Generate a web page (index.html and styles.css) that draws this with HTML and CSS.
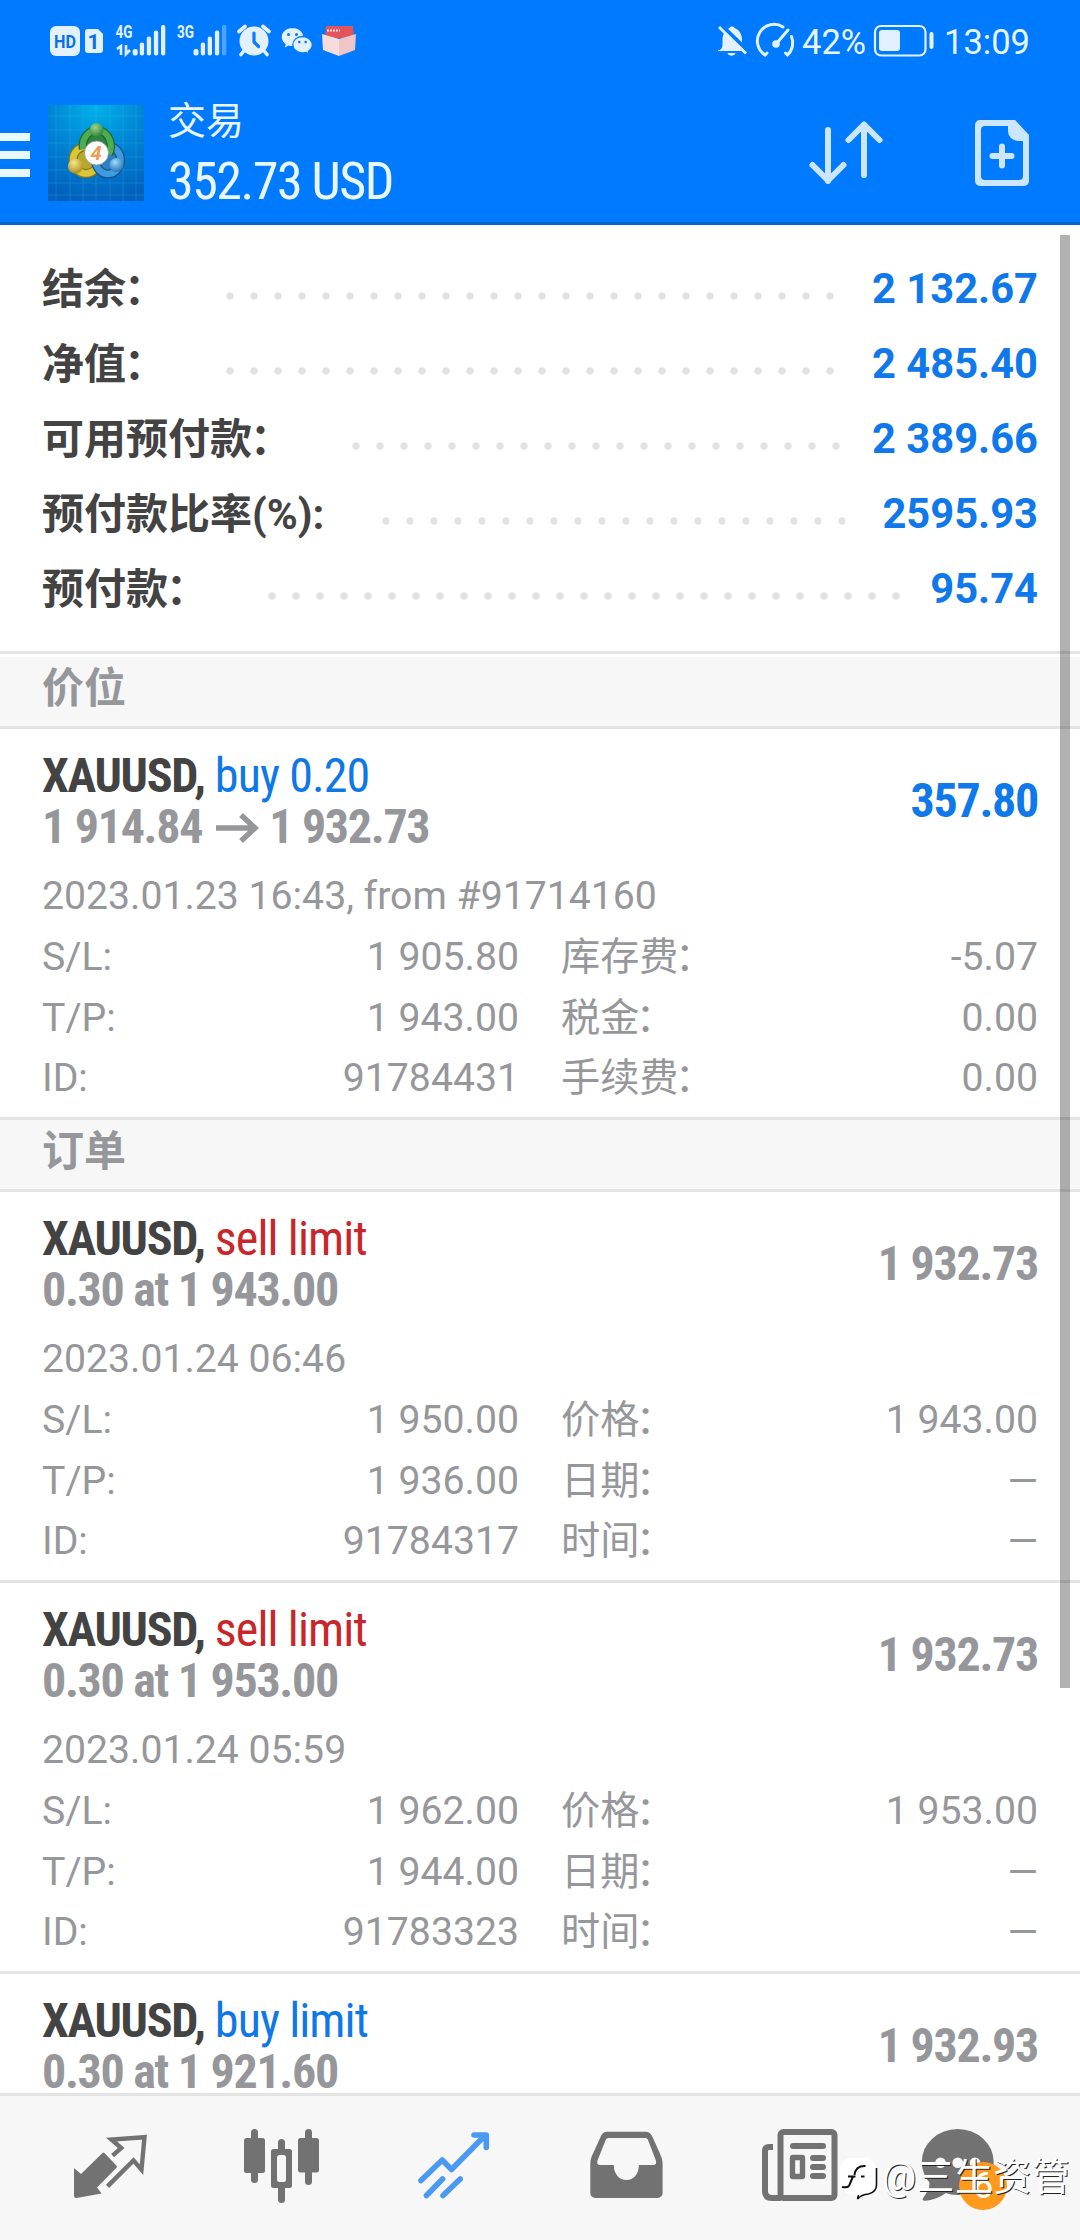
FILE: index.html
```html
<!DOCTYPE html>
<html lang="zh-CN">
<head>
<meta charset="utf-8">
<title>交易</title>
<link rel="stylesheet" href="styles.css">
</head>
<body>
<div class="app">
  <header class="header">
    <div class="status">
      <svg class="s-hd" viewBox="50 24 30 34" width="30" height="34"><rect x="50" y="26" width="30" height="30" rx="6" fill="#e3f1ff"/><text x="65" y="47.5" text-anchor="middle" textLength="22" lengthAdjust="spacingAndGlyphs" class="hd-text">HD</text></svg>
      <svg class="s-sim" viewBox="85 24 18 34" width="18" height="34"><path d="M88 29h10l5 5v16a3 3 0 0 1-3 3H88a3 3 0 0 1-3-3V32a3 3 0 0 1 3-3z" fill="#e3f1ff"/><text x="93.5" y="49" text-anchor="middle" class="sim-text">1</text></svg>
      <svg class="s-4g" viewBox="115 24 51 34" width="51" height="34"><text x="115.500" y="38" textLength="17" lengthAdjust="spacingAndGlyphs" class="net-text">4G</text><g fill="#e3f1ff"><rect x="132.700" y="49" width="5" height="6.500" rx="2"/><rect x="139.800" y="42.500" width="4.300" height="13" rx="2"/><rect x="146.800" y="36.500" width="4.300" height="19" rx="2"/><rect x="153.900" y="30.500" width="4.300" height="25" rx="2"/><rect x="161" y="25" width="4.300" height="30.500" rx="2"/></g><path d="M117 49l4-3v9M126 45v9l4-4" fill="none" stroke="#e3f1ff" stroke-width="2.600"/></svg>
      <svg class="s-3g" viewBox="176 24 51 34" width="51" height="34"><text x="177" y="38" textLength="17" lengthAdjust="spacingAndGlyphs" class="net-text">3G</text><g fill="#e3f1ff"><rect x="193.500" y="49" width="5" height="6.500" rx="2"/><rect x="200.800" y="42.500" width="4.300" height="13" rx="2"/><rect x="207.700" y="36.500" width="4.300" height="19" rx="2"/><rect x="214.900" y="30.500" width="4.300" height="25" rx="2"/><rect x="222" y="25" width="4.300" height="30.500" rx="2" opacity=".35"/></g></svg>
      <svg class="s-alarm" viewBox="237 24 34 34" width="34" height="34"><circle cx="254" cy="41" r="14.500" fill="#e3f1ff"/><path d="M239 31.500l6-5M269 31.500l-6-5" stroke="#e3f1ff" stroke-width="3.600" stroke-linecap="round"/><path d="M243 52l-2 2.500M265 52l2 2.500" stroke="#e3f1ff" stroke-width="3.600" stroke-linecap="round"/><path d="M254 33v9l4.500 4.500" fill="none" stroke="#0a7cff" stroke-width="3.200" stroke-linecap="round" stroke-linejoin="round"/></svg>
      <svg class="s-wechat" viewBox="281 24 33 34" width="33" height="34"><path d="M292.500 28c-6 0-10.700 4-10.700 9 0 3 1.500 5.500 4 7.200l-1 3.300 3.800-2c1.300.4 2.600.6 4 .6 6 0 10.600-4 10.600-9s-4.700-9.100-10.700-9.100z" fill="#e3f1ff"/><path d="M302.500 36.500c-5.300 0-9.700 3.600-9.700 8.200s4.400 8.300 9.700 8.300c1.200 0 2.400-.2 3.500-.5l3.300 1.700-.9-2.900c2.400-1.600 3.900-3.900 3.900-6.600 0-4.600-4.500-8.200-9.800-8.200z" fill="#e3f1ff" stroke="#007aff" stroke-width="1.300"/><g fill="#007aff"><circle cx="288.500" cy="34.500" r="1.500"/><circle cx="296.500" cy="34.500" r="1.500"/><circle cx="299.300" cy="42" r="1.300"/><circle cx="305.700" cy="42" r="1.300"/></g></svg>
      <svg class="s-box" viewBox="322 24 35 34" width="35" height="34"><path d="M326 26h27l1 12h-29z" fill="#e2555d"/><path d="M322 34l17 5v17l-16-6z" fill="#f7dcdc"/><path d="M356 34l-17 5v17l16-6z" fill="#efc6c8"/><path d="M327 30.500h13" stroke="#fbe4e4" stroke-width="2" stroke-dasharray="2 1"/></svg>
      <svg class="s-bell" viewBox="716 24 32 34" width="32" height="34"><path d="M720 50c2-1.500 2.500-3 2.500-6v-4c0-6 3-10.500 7-12 .5-2 4.500-2 5 0 4.500 1.500 7.500 6 7.500 12v4c0 3 .5 4.500 2.500 6v1H718v-1z" fill="#e3f1ff"/><path d="M727.500 53h8c-1 3.500-7 3.500-8 0z" fill="#e3f1ff"/><path d="M721 25l27 26" stroke="#007aff" stroke-width="4"/><path d="M719 27l27 26.500" stroke="#e3f1ff" stroke-width="2.800"/></svg>
      <svg class="s-gauge" viewBox="757 22 38 36" width="38" height="36"><g fill="none" stroke="#e3f1ff" stroke-width="3" stroke-linecap="round"><path d="M767 52l-2 2a16.500 16.500 0 0 1 18-28"/><path d="M791.500 35.500a16.500 16.500 0 0 1-4 18.500l-2-2"/><path d="M776 43l12-14"/></g><circle cx="776" cy="43" r="3.800" fill="#e3f1ff"/></svg>
      <span class="pct">42%</span>
      <svg class="s-batt" viewBox="873 24 62 34" width="62" height="34"><rect x="875" y="26" width="50.500" height="29.500" rx="6" fill="none" stroke="#e3f1ff" stroke-width="2.200"/><rect x="879" y="30" width="21" height="21" rx="3" fill="#e3f1ff"/><rect x="929.500" y="32" width="4" height="17" rx="2" fill="#e3f1ff"/></svg>
      <span class="clock">13:09</span>
    </div>
    <div class="bar">
      <div class="menu"><i></i><i></i><i></i></div>
      <svg class="logo" viewBox="0 0 96 96" width="96" height="96">
        <defs>
          <radialGradient id="lg" cx=".5" cy="0" r="1"><stop offset="0" stop-color="#00b2ea"/><stop offset=".5" stop-color="#0084d4"/><stop offset="1" stop-color="#0061bd"/></radialGradient>
          <radialGradient id="gg" cx=".4" cy=".3" r=".8"><stop offset="0" stop-color="#9bd48b"/><stop offset="1" stop-color="#1d7a30"/></radialGradient>
          <radialGradient id="yy" cx=".4" cy=".3" r=".8"><stop offset="0" stop-color="#f8e88a"/><stop offset="1" stop-color="#a38412"/></radialGradient>
          <radialGradient id="bb" cx=".4" cy=".3" r=".8"><stop offset="0" stop-color="#9fdcf8"/><stop offset="1" stop-color="#1566b0"/></radialGradient>
        </defs>
        <rect width="96" height="96" fill="url(#lg)"/>
        <path d="M8 0v96M22 0v96M35 0v96M48 0v96M62 0v96M75 0v96M88 0v96M0 11h96M0 25h96M0 38h96M0 52h96M0 65h96M0 78h96M0 90h96" stroke="#5cc6f0" stroke-width=".7" opacity=".3"/>
        <ellipse cx="38" cy="55" rx="13" ry="13.500" fill="#b9a62a" stroke="#82731d" stroke-width="9"/><ellipse cx="38" cy="55" rx="13" ry="13.500" fill="none" stroke="#d8c638" stroke-width="6.500"/>
        <ellipse cx="60" cy="55" rx="12.500" ry="14" fill="#2b7fc4" stroke="#16538e" stroke-width="9"/><ellipse cx="60" cy="55" rx="12.500" ry="14" fill="none" stroke="#3f9bdc" stroke-width="6.500"/>
        <path d="M35 44a14 16 0 1 1 26 5" fill="#2f8540" stroke="#1f6631" stroke-width="8.500"/><path d="M35 44a14 16 0 1 1 26 5" fill="none" stroke="#4cae50" stroke-width="6"/>
        <circle cx="48.500" cy="25" r="7" fill="url(#gg)"/><circle cx="27.500" cy="61" r="7.500" fill="url(#yy)"/><circle cx="68.500" cy="60" r="7" fill="url(#bb)"/>
        <circle cx="48.500" cy="48" r="12" fill="#fff" stroke="#8a949b" stroke-width=".8"/>
        <text x="48" y="55" text-anchor="middle" class="logo-text">4</text>
      </svg>
      <div class="titles"><div class="t1">交易</div><div class="t2 cond">352.73 USD</div></div>
      <svg class="i-sort" viewBox="808 118 78 70" width="78" height="70"><path d="M828 130v51M812.500 165l15.500 15.500 15.500-15.500M864 175v-50M848.500 140l15.500-15.500 15.500 15.500" fill="none" stroke="#cce6ff" stroke-width="6" stroke-linecap="round" stroke-linejoin="round"/></svg>
      <svg class="i-new" viewBox="975 118 54 70" width="54" height="70"><path fill-rule="evenodd" d="M980 120h35l14 15v46a5 5 0 0 1-5 5h-44a5 5 0 0 1-5-5v-56a5 5 0 0 1 5-5zm5 6a4 4 0 0 0-4 4v46a4 4 0 0 0 4 4h34a4 4 0 0 0 4-4v-35h-5a10 10 0 0 1-10-10v-5z" fill="#cce6ff"/><path d="M1002 146.500v19M992.500 156h19" stroke="#cce6ff" stroke-width="6" stroke-linecap="round"/></svg>
    </div>
  </header>

  <main class="list">
    <section class="summary">
      <div class="row"><span class="label">结余<i>：</i></span><span class="dots"></span><span class="value">2 132.67</span></div>
      <div class="row"><span class="label">净值<i>：</i></span><span class="dots"></span><span class="value">2 485.40</span></div>
      <div class="row"><span class="label">可用预付款<i>：</i></span><span class="dots"></span><span class="value">2 389.66</span></div>
      <div class="row"><span class="label">预付款比率(%):</span><span class="dots"></span><span class="value">2595.93</span></div>
      <div class="row"><span class="label">预付款<i>：</i></span><span class="dots"></span><span class="value">95.74</span></div>
    </section>
    <h2 class="band">价位</h2>
    <article class="deal">
      <div class="top"><div><div class="line cond"><b>XAUUSD,</b> <span class="buy">buy 0.20</span></div><div class="line cond price">1 914.84<svg class="arrow" viewBox="0 0 43 34" width="43" height="34"><path d="M0 19h39M25 6l14 13-14 13" fill="none" stroke="#96979b" stroke-width="5.500"/></svg>1 932.73</div></div><div class="total cond profit">357.80</div></div>
      <div class="date">2023.01.23 16:43, from #91714160</div>
      <div class="grid">
        <span>S/L:</span><span>1 905.80</span><span>库存费<i>：</i></span><span>-5.07</span>
        <span>T/P:</span><span>1 943.00</span><span>税金<i>：</i></span><span>0.00</span>
        <span>ID:</span><span>91784431</span><span>手续费<i>：</i></span><span>0.00</span>
      </div>
    </article>
    <h2 class="band">订单</h2>
    <article class="deal">
      <div class="top"><div><div class="line cond"><b>XAUUSD,</b> <span class="sell">sell limit</span></div><div class="line cond price">0.30 at 1 943.00</div></div><div class="total cond">1 932.73</div></div>
      <div class="date">2023.01.24 06:46</div>
      <div class="grid">
        <span>S/L:</span><span>1 950.00</span><span>价格<i>：</i></span><span>1 943.00</span>
        <span>T/P:</span><span>1 936.00</span><span>日期<i>：</i></span><span>—</span>
        <span>ID:</span><span>91784317</span><span>时间<i>：</i></span><span>—</span>
      </div>
    </article>
    <article class="deal">
      <div class="top"><div><div class="line cond"><b>XAUUSD,</b> <span class="sell">sell limit</span></div><div class="line cond price">0.30 at 1 953.00</div></div><div class="total cond">1 932.73</div></div>
      <div class="date">2023.01.24 05:59</div>
      <div class="grid">
        <span>S/L:</span><span>1 962.00</span><span>价格<i>：</i></span><span>1 953.00</span>
        <span>T/P:</span><span>1 944.00</span><span>日期<i>：</i></span><span>—</span>
        <span>ID:</span><span>91783323</span><span>时间<i>：</i></span><span>—</span>
      </div>
    </article>
    <article class="deal">
      <div class="top"><div><div class="line cond"><b>XAUUSD,</b> <span class="buy">buy limit</span></div><div class="line cond price">0.30 at 1 921.60</div></div><div class="total cond">1 932.93</div></div>
    </article>
    <div class="scrollbar"></div>
  </main>

  <nav class="tabs">
    <svg viewBox="67 2120 86 92"><path d="M74 2168l7 6 21.500-21q1-.8 2 0l12 12.700q.8 1 0 2L97 2187.500l4.600 6-25 4.500q-2.600 0-2.600-2.500z" fill="#727272"/><path d="M112.600 2155.700l8.600-7.700-9.700-8.500 33-2.300-3 32.500-8-9.300-26 26" fill="none" stroke="#727272" stroke-width="4.400"/></svg>
    <svg viewBox="239 2120 86 92" fill="#727272"><rect x="244" y="2138" width="21" height="35" rx="2.500"/><rect x="251" y="2129" width="7" height="54" rx="3.500"/><rect x="298" y="2138" width="21" height="34.500" rx="2.500"/><rect x="305" y="2129" width="7" height="56" rx="3.500"/><rect x="271" y="2149" width="21" height="39" rx="2.500"/><rect x="278" y="2139" width="7" height="64" rx="3.500"/><rect x="277" y="2155" width="9" height="27" rx="2.500" fill="#f7f7f7"/></svg>
    <svg viewBox="411 2120 86 92"><g fill="none" stroke="#4a9af4" stroke-width="5.600" stroke-linecap="round" stroke-linejoin="round"><path d="M421 2180.500l21.200-20.500 9.300 9.500 33-33.500M474 2135h12.300v12.500M426.500 2195.500l16-16.500M443 2195.500l17.200-16.500"/></g><path d="M479 2135h7.300v7.500z" fill="#4a9af4"/></svg>
    <svg viewBox="583 2120 86 92"><path fill-rule="evenodd" d="M608 2131.700h36.500c4 0 6 1 8 5.300l7 15.500c2 5 3.100 7 3.100 11.500v29a5 5 0 0 1-5 5h-62.300a5 5 0 0 1-5-5v-29c0-4.500 1-7 3.200-11.500l7-15.500c2-4.300 3.500-5.300 7.500-5.300zm1 6.300c-1.800 0-2.500.5-3.300 2l-8 20c-1 3-.3 5 2.700 5h13.400c0 9 5.600 15 12.600 15s12.500-6 12.500-15H653c3 0 3.700-2 2.700-5l-7.700-20c-.8-1.500-1.500-2-3.300-2z" fill="#727272"/></svg>
    <svg viewBox="755 2120 86 92"><rect x="780.500" y="2132" width="54" height="66" rx="3" fill="none" stroke="#727272" stroke-width="6"/><path d="M773 2147h-4q-4 0-4 4v40q0 7 7 7h9" fill="none" stroke="#727272" stroke-width="6"/><path d="M793 2146h30M813 2158h10M813 2167h10M813 2176h10" stroke="#727272" stroke-width="6" stroke-linecap="round"/><rect x="792.500" y="2157.500" width="10" height="19" rx=".5" fill="none" stroke="#727272" stroke-width="5.400"/></svg>
    <div class="chat"><svg viewBox="917 2120 94 92" width="94" height="92"><ellipse cx="957.700" cy="2162" rx="36" ry="33" fill="#727272"/><path d="M925 2174q8 9 2 18l-4.500 7q0 3 8 1 9-2 16-7.500z" fill="#727272"/><g fill="#f7f7f7"><circle cx="940.500" cy="2162.700" r="5.300"/><circle cx="957.700" cy="2162.700" r="5.300"/><circle cx="975" cy="2162.700" r="5.300"/></g></svg><span class="badge">6</span></div>
    <div class="watermark"><svg viewBox="0 0 38 44" width="38" height="44"><rect x="0" y="0" width="36" height="36" rx="11" fill="#fff"/><path d="M14 35l6 1-2 5z" fill="#fff"/><path d="M36.500 10v17q0 7-8 9-7 .500-11 5l1-4" fill="none" stroke="#111" stroke-width="1.600"/><path d="M2 29q5 1 7-1M9 28l4-9.500M8 18.500h7.500M14.500 17q1-9.500 11-9M21 18.500h3.500" fill="none" stroke="#111" stroke-width="2"/></svg><span>@三生资管</span></div>
  </nav>
</div>
</body>
</html>
```
FILE: styles.css
```css
* { box-sizing: border-box; margin: 0; padding: 0; }
body {
  width: 1080px;
  height: 2240px;
  overflow: hidden;
  background: #fff;
  font-family: Roboto, "Noto Sans CJK SC", sans-serif;
  color: #96979b;
}
svg { display: block; flex: none; overflow: visible; }
.app { display: flex; flex-direction: column; height: 2240px; }
.cond { font-family: "Roboto Condensed", Roboto, "Noto Sans CJK SC", sans-serif; font-stretch: 75%; }

/* header */
.header { flex: none; height: 225px; background: #007aff; border-bottom: 3px solid #0a68cc; color: #e9f6ff; }
.status { display: flex; align-items: center; height: 82px; padding-left: 50px; }
.s-sim { margin-left: 5px; }
.s-4g { margin-left: 12px; }
.s-3g { margin-left: 10px; }
.s-alarm { margin-left: 10px; }
.s-wechat { margin-left: 10px; }
.s-box { margin-left: 8px; }
.s-bell { margin-left: 359px; }
.s-gauge { margin-left: 9px; }
.pct, .clock { font-size: 34.5px; line-height: 36px; white-space: nowrap; padding-top: 1px; }
.pct { width: 70px; margin-left: 7px; }
.s-batt { margin-left: 1px; }
.clock { margin-left: 9px; }
.hd-text { font: 700 18px Roboto, sans-serif; fill: #0a6fe8; }
.sim-text { font: 700 21px Roboto, sans-serif; fill: #0a6fe8; }
.net-text { font: 700 18px Roboto, sans-serif; fill: #e3f1ff; }
.bar { display: flex; height: 140px; }
.menu { width: 30px; margin: 51px 18px 0 0; display: flex; flex-direction: column; gap: 10px; }
.menu i { height: 8px; background: #eaf8ff; }
.logo { margin-top: 23px; }
.logo-text { font: italic 700 20px Roboto, sans-serif; fill: #ee9a50; }
.titles { margin-left: 24px; width: 640px; }
.t1 { font-size: 38px; line-height: 50px; margin-top: 14px; }
.t2 { font-size: 52px; line-height: 60px; margin-top: 6px; letter-spacing: -1.5px; }
.i-sort { margin-top: 36px; }
.i-new { margin: 36px 0 0 89px; }

/* account summary */
.list { flex: 1; min-height: 0; overflow: hidden; position: relative; }
.summary { padding: 26px 42px 25px; border-bottom: 3px solid #e4e4e4; margin-bottom: 3px; }
.row { display: flex; height: 75px; line-height: 75px; font-size: 42px; font-weight: 700; white-space: nowrap; }
.label { color: #434343; padding-top: 1px; }
.label i { font-style: normal; margin: 0 .05em 0 -.05em; }
.grid i { font-style: normal; margin-left: -.09em; }
.value { color: #0f78ea; font-size: 41.7px; }
.dots {
  flex: 1;
  height: 8px;
  margin: 41px 24px 0 58px;
  background: radial-gradient(circle at 4px 4px, #e2e2e2 3.3px, transparent 4.1px) 0 0 / 24px 8px repeat-x;
}
.band {
  height: 72px;
  padding-left: 42px;
  background: #f7f7f7;
  border-bottom: 3px solid #e4e4e4;
  font-size: 42px;
  line-height: 64px;
}

/* deals */
.deal { height: 391px; padding: 21px 42px 0; border-bottom: 3px solid #e4e4e4; }
.top { display: flex; justify-content: space-between; align-items: center; height: 102px; font-size: 48px; }
.line { height: 51px; line-height: 51px; white-space: nowrap; letter-spacing: -.9px; }
.line b { color: #434343; letter-spacing: -1.3px; }
.price, .total { font-weight: 700; letter-spacing: -1.3px; }
.total { margin-bottom: 2px; }
.arrow { display: inline-block; margin: 0 10px 0 14px; }
.buy { color: #0f78e8; }
.sell { color: #c7272a; }
.profit { color: #0f78ea; }
.date, .grid { font-size: 39.2px; line-height: 61px; }
.date { margin-top: 14px; }
.grid { display: grid; grid-template-columns: 140px 337px 220px 257px; grid-auto-rows: 60.6px; }
.grid span:nth-child(4n+3) { margin-left: 42px; margin-right: -42px; }
.grid span:nth-child(even) { text-align: right; }
.grid span:nth-child(4n) { margin-right: -42px; }
.scrollbar { position: absolute; left: 1060px; top: 10px; width: 10px; height: 1453px; background: rgba(0, 0, 0, .3); }

/* tabs */
.tabs { position: relative; flex: none; height: 147px; display: flex; padding: 24px 24px 0; background: #f7f7f7; border-top: 3px solid #e4e4e4; }
.tabs > svg { width: 86px; height: 92px; margin: 0 43px; }
.chat { position: relative; width: 94px; height: 92px; margin-left: 33px; }
.badge { position: absolute; left: 42px; top: 42px; width: 48px; height: 48px; border-radius: 50%; background: #ff9a1c; color: #fff; font-size: 36px; line-height: 48px; text-align: center; }
.watermark { position: absolute; left: 840px; top: 62px; display: flex; align-items: center; gap: 4px; height: 44px; color: #fff; font-size: 38px; line-height: 40px; letter-spacing: .4px; text-shadow: 1px 1px 0 #222; white-space: nowrap; }
.watermark span { margin-bottom: 6px; }
```
